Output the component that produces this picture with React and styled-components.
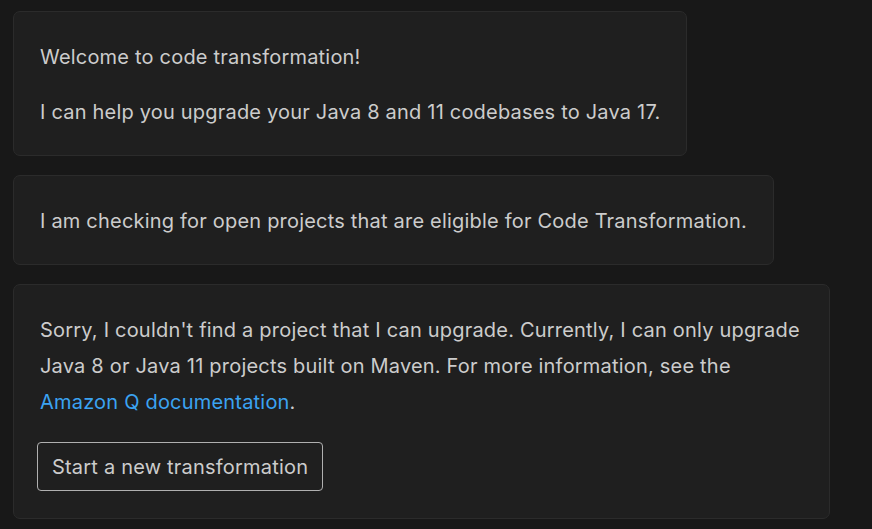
import React from "react";
import styled, { createGlobalStyle } from "styled-components";

const Global = createGlobalStyle`
  html, body { margin: 0; padding: 0; background: #181818; }
  body {
    font-family: Inter, "Noto Sans", "Liberation Sans", sans-serif;
    color: #cccccc;
    -webkit-font-smoothing: antialiased;
  }
`;

const Feed = styled.div`
  display: flex;
  flex-direction: column;
  align-items: flex-start;
  gap: 19px;
  padding: 11px 42px 9px 13px;
  min-height: 529px;
  box-sizing: border-box;
`;

const Card = styled.div`
  box-sizing: border-box;
  max-width: 817px;
  width: ${(p) => (p.$wide ? "817px" : "auto")};
  background: #1f1f1f;
  border: 1px solid #2b2b2b;
  border-radius: 7px;
  padding: ${(p) => (p.$wide ? "27px 26px 27px" : "27px 26px 25px")};
  font-size: 20px;
  line-height: 36px;
  letter-spacing: 0.2px;
`;

const Para = styled.p`
  margin: 0;
  & + & { margin-top: 19px; }
`;

const Link = styled.a`
  color: #3ba3f2;
  text-decoration: none;
`;

const Actions = styled.div`
  display: flex;
  margin-top: 22px;
  margin-left: -3px;
`;

const Button = styled.button`
  font-family: inherit;
  font-size: 20px;
  letter-spacing: 0.2px;
  color: #cccccc;
  background: transparent;
  border: 1px solid #b0b0b0;
  border-radius: 4px;
  height: 49px;
  padding: 0 14px;
  cursor: pointer;
`;

export default function App() {
  return (
    <>
      <Global />
      <Feed>
        <Card>
          <Para>Welcome to code transformation!</Para>
          <Para>I can help you upgrade your Java 8 and 11 codebases to Java 17.</Para>
        </Card>
        <Card>
          <Para>I am checking for open projects that are eligible for Code Transformation.</Para>
        </Card>
        <Card $wide>
          <Para>
            Sorry, I couldn't find a project that I can upgrade. Currently, I can only upgrade Java 8 or Java 11
            projects built on Maven. For more information, see the{" "}
            <Link href="#">Amazon Q documentation</Link>.
          </Para>
          <Actions>
            <Button>Start a new transformation</Button>
          </Actions>
        </Card>
      </Feed>
    </>
  );
}
